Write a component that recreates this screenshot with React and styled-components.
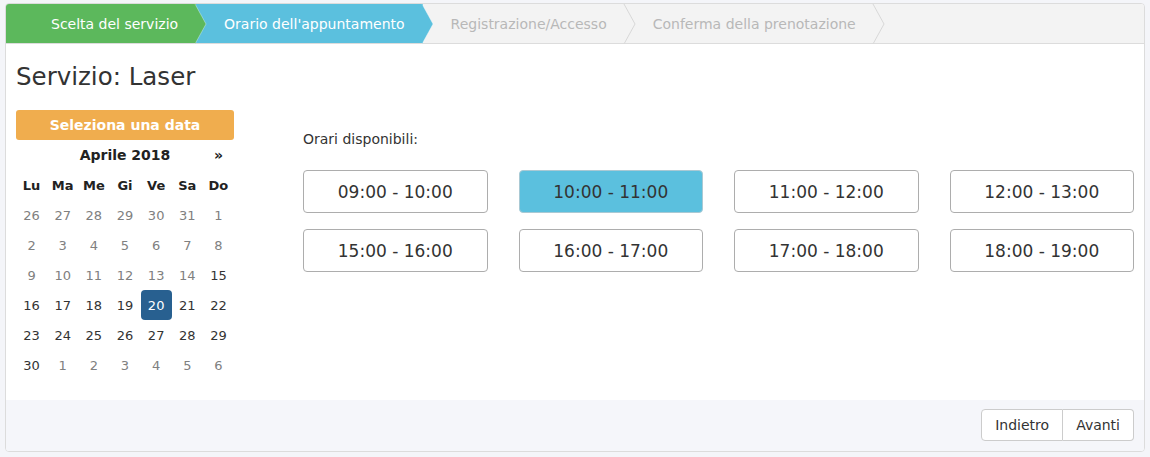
import React, { useState } from "react";
import styled, { createGlobalStyle, css } from "styled-components";

const GlobalStyle = createGlobalStyle`
  html, body {
    margin: 0;
    padding: 0;
    background: #f4f5f9;
    font-family: "DejaVu Sans", Verdana, sans-serif;
    color: #333;
  }
`;

const Page = styled.div`
  padding: 3px 5px 5px;
`;

const Card = styled.div`
  background: #fff;
  border: 1px solid #dcdcdc;
  border-radius: 4px;
  overflow: hidden;
`;

const Steps = styled.div`
  display: flex;
  height: 39px;
  background: #f3f3f3;
  border-bottom: 1px solid #dcdcdc;
`;

const StepItem = styled.div`
  position: relative;
  display: flex;
  align-items: center;
  height: 100%;
  padding: 0 18px 0 ${({ first }) => (first ? "45px" : "28px")};
  font-size: 14px;
  white-space: nowrap;
  color: ${({ status }) => (status === "todo" ? "#b8b8b8" : "#fff")};
  background: ${({ status }) =>
    status === "done" ? "#5cb85c" : status === "active" ? "#5bc0de" : "#f3f3f3"};
  z-index: ${({ z }) => z};
`;

const Tip = styled.svg`
  position: absolute;
  top: 0;
  right: -11px;
  width: 12px;
  height: 40px;
  overflow: visible;
`;

const stepColors = {
  done: "#5cb85c",
  active: "#5bc0de",
  todo: "#f3f3f3",
};

const Step = ({ label, status, first, z }) => (
  <StepItem status={status} first={first} z={z}>
    {label}
    <Tip viewBox="0 0 12 40">
      <polygon points="0,0 11,20 0,40" fill={stepColors[status]} />
      <polyline
        points="0,0 11,20 0,40"
        fill="none"
        stroke={status === "todo" ? "#d8d8d8" : "rgba(255,255,255,0.35)"}
        strokeWidth="1"
      />
    </Tip>
  </StepItem>
);

const Body = styled.div`
  padding: 8px 10px 20px;
`;

const Title = styled.h2`
  margin: 10px 0 18px;
  font-size: 24.5px;
  font-weight: normal;
  line-height: 30px;
  color: #333;
`;

const Content = styled.div`
  display: flex;
  align-items: flex-start;
`;

const LeftCol = styled.div`
  width: 218px;
  flex-shrink: 0;
`;

const PickButton = styled.div`
  height: 30px;
  line-height: 30px;
  text-align: center;
  background: #f0ad4e;
  color: #fff;
  font-weight: bold;
  font-size: 14px;
  border-radius: 3px;
`;

const CalTable = styled.table`
  width: 100%;
  border-collapse: collapse;
  table-layout: fixed;
`;

const HeadCell = styled.th`
  height: 30px;
  padding: 0;
  font-size: ${({ big }) => (big ? "14px" : "13px")};
  font-weight: bold;
  text-align: center;
  color: #222;
`;

const DayCell = styled.td`
  height: 30px;
  padding: 0;
  text-align: center;
  font-size: 13px;
  color: ${({ muted }) => (muted ? "#808080" : "#333")};
  border-radius: 4px;
  ${({ selected }) =>
    selected &&
    css`
      background: #286090;
      color: #fff;
    `}
`;

const RightCol = styled.div`
  flex: 1;
  margin-left: 69px;
  padding-top: 20px;
`;

const Label = styled.div`
  font-size: 14px;
  line-height: 18px;
  color: #333;
`;

const SlotGrid = styled.div`
  display: grid;
  grid-template-columns: repeat(4, 1fr);
  column-gap: 31px;
  row-gap: 16px;
  margin-top: 22px;
`;

const Slot = styled.button`
  height: 43px;
  border: 1px solid ${({ active }) => (active ? "#a9c9d4" : "#adadad")};
  border-radius: 4px;
  background: ${({ active }) => (active ? "#5bc0de" : "#fff")};
  color: #333;
  font-family: inherit;
  font-size: 17px;
  cursor: pointer;
  padding: 0;
`;

const Footer = styled.div`
  display: flex;
  justify-content: flex-end;
  background: #f5f6fa;
  padding: 9px 10px 10px;
`;

const BtnGroup = styled.div`
  display: flex;
`;

const NavButton = styled.button`
  height: 32px;
  padding: 0 13px;
  background: #fff;
  border: 1px solid #ccc;
  color: #333;
  font-family: inherit;
  font-size: 14px;
  cursor: pointer;
  &:first-child {
    border-radius: 4px 0 0 4px;
  }
  &:last-child {
    border-left: none;
    border-radius: 0 4px 4px 0;
  }
`;

const weeks = [
  [26, 27, 28, 29, 30, 31, 1],
  [2, 3, 4, 5, 6, 7, 8],
  [9, 10, 11, 12, 13, 14, 15],
  [16, 17, 18, 19, 20, 21, 22],
  [23, 24, 25, 26, 27, 28, 29],
  [30, 1, 2, 3, 4, 5, 6],
];

const slots = [
  "09:00 - 10:00",
  "10:00 - 11:00",
  "11:00 - 12:00",
  "12:00 - 13:00",
  "15:00 - 16:00",
  "16:00 - 17:00",
  "17:00 - 18:00",
  "18:00 - 19:00",
];

const App = () => {
  const [slot, setSlot] = useState(1);

  return (
    <Page>
      <GlobalStyle />
      <Card>
        <Steps>
          <Step label="Scelta del servizio" status="done" first z={4} />
          <Step label="Orario dell'appuntamento" status="active" z={3} />
          <Step label="Registrazione/Accesso" status="todo" z={2} />
          <Step label="Conferma della prenotazione" status="todo" z={1} />
        </Steps>
        <Body>
          <Title>Servizio: Laser</Title>
          <Content>
            <LeftCol>
              <PickButton>Seleziona una data</PickButton>
              <CalTable>
                <thead>
                  <tr>
                    <HeadCell />
                    <HeadCell big colSpan={5}>
                      Aprile 2018
                    </HeadCell>
                    <HeadCell big>»</HeadCell>
                  </tr>
                  <tr>
                    {["Lu", "Ma", "Me", "Gi", "Ve", "Sa", "Do"].map((d) => (
                      <HeadCell key={d}>{d}</HeadCell>
                    ))}
                  </tr>
                </thead>
                <tbody>
                  {weeks.map((week, wi) => (
                    <tr key={wi}>
                      {week.map((day, di) => {
                        const otherMonth = (wi === 0 && day > 20) || (wi === 5 && day < 10);
                        const past = !otherMonth && day < 15;
                        return (
                          <DayCell
                            key={di}
                            muted={otherMonth || past}
                            selected={!otherMonth && day === 20}
                          >
                            {day}
                          </DayCell>
                        );
                      })}
                    </tr>
                  ))}
                </tbody>
              </CalTable>
            </LeftCol>
            <RightCol>
              <Label>Orari disponibili:</Label>
              <SlotGrid>
                {slots.map((s, i) => (
                  <Slot key={s} active={i === slot} onClick={() => setSlot(i)}>
                    {s}
                  </Slot>
                ))}
              </SlotGrid>
            </RightCol>
          </Content>
        </Body>
        <Footer>
          <BtnGroup>
            <NavButton>Indietro</NavButton>
            <NavButton>Avanti</NavButton>
          </BtnGroup>
        </Footer>
      </Card>
    </Page>
  );
};

export default App;
